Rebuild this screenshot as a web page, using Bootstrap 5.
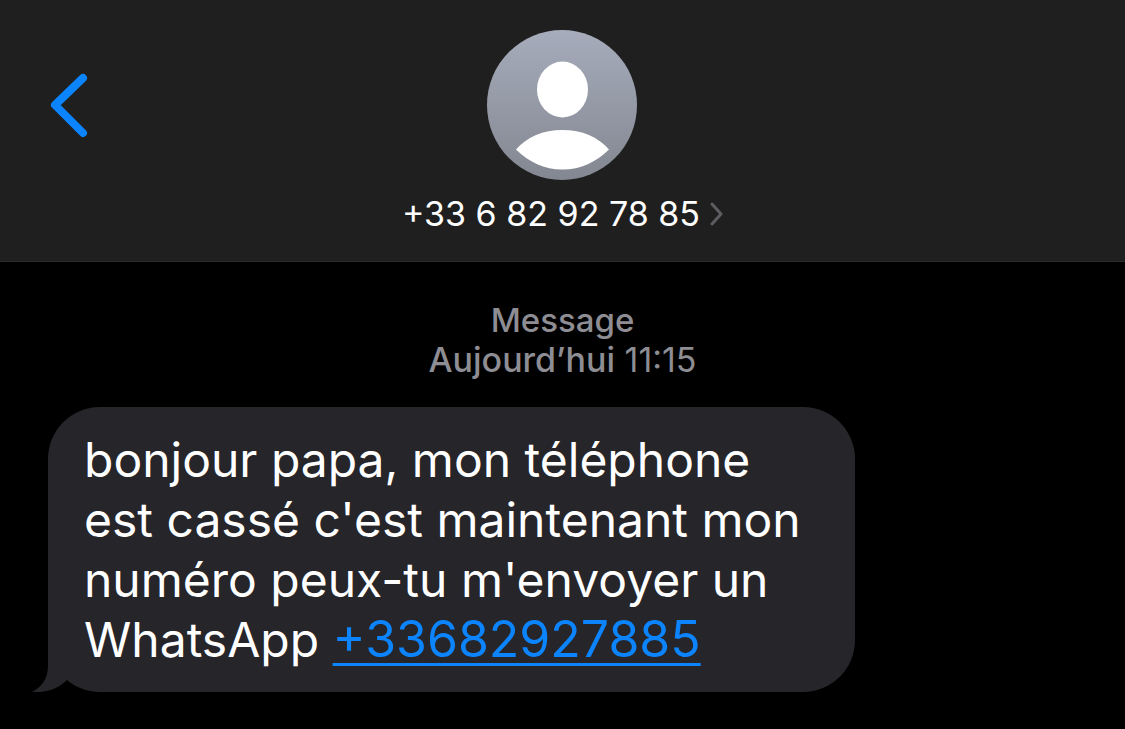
<!DOCTYPE html>
<html lang="fr">
<head>
<meta charset="utf-8">
<meta name="viewport" content="width=device-width, initial-scale=1">
<title>Message</title>
<link href="https://cdn.jsdelivr.net/npm/bootstrap@5.3.0/dist/css/bootstrap.min.css" rel="stylesheet">
<style>
body{background:#000;color:#fff;font-family:Inter,"Liberation Sans",sans-serif}
.topbar{background:#1f1f1f;border-bottom:1px solid #2b2b2c;padding:30px 48px 27px;display:grid;grid-template-columns:1fr auto 1fr}
.back-btn{margin-top:42px}
.contact-btn{font-size:34px;line-height:40px;gap:10px;margin-top:14px}
.stamp{color:#8d8d93;font-size:33px;line-height:39px;padding-top:39px}
.stamp-date{font-size:34px}
.thread{padding:28px 48px 37px}
.bubble{background:#262529;border-radius:52px;padding:23px 36px 22px;font-size:48px;line-height:60px;width:807px;max-width:100%}
.bubble a{color:#0b84fe;font-size:50px;line-height:1;text-decoration-thickness:3px;text-underline-offset:6px}
.bubble-tail{left:-16px;bottom:0}
</style>
</head>
<body>
<header class="topbar">
<button class="back-btn btn p-0 border-0 align-self-start text-start" type="button" aria-label="Retour">
<svg class="d-block" width="42" height="66" viewBox="0 0 42 66" fill="none" stroke="#0b84fe" stroke-width="8" stroke-linecap="round" stroke-linejoin="round"><path d="M35 6 7 33 35 61"/></svg>
</button>
<div class="d-flex flex-column align-items-center">
<svg width="150" height="150" viewBox="0 0 150 150" aria-hidden="true"><defs><linearGradient id="shade" x2="0" y2="1"><stop stop-color="#a6acbb"/><stop offset="1" stop-color="#838791"/></linearGradient></defs><circle cx="75" cy="75" r="75" fill="url(#shade)"/><ellipse cx="75.500" cy="59.500" rx="25.500" ry="28" fill="#fff"/><path d="M29 119.500C40 107 56 100 75.500 100S111 107 122 119.500C109 132 94 139.500 75.500 139.500S42 132 29 119.500Z" fill="#fff"/></svg>
<button class="contact-btn btn p-0 border-0 text-white d-flex align-items-center" type="button"><span>+33 6 82 92 78 85</span><svg width="13" height="24" viewBox="0 0 13 24" fill="none" stroke="#5d5d61" stroke-width="3" stroke-linecap="round" stroke-linejoin="round"><path d="m2 2 9 10-9 10"/></svg></button>
</div>
</header>
<main>
<div class="stamp text-center"><div class="fw-medium">Message</div><div class="stamp-date"><span class="fw-medium">Aujourd’hui</span> 11:15</div></div>
<div class="thread">
<div class="bubble position-relative">
<svg class="bubble-tail position-absolute" width="60" height="50" viewBox="0 0 60 50" aria-hidden="true"><path d="M16 0V24C16 36 10 45 0 50C14 51 26 47 35 38L60 20V0Z" fill="#262529"/></svg>
<div class="position-relative">bonjour papa, mon téléphone<br>est cassé c'est maintenant mon<br>numéro peux-tu m'envoyer un<br>WhatsApp <a href="tel:+33682927885">+33682927885</a></div>
</div>
</div>
</main>
<script src="https://cdn.jsdelivr.net/npm/bootstrap@5.3.0/dist/js/bootstrap.bundle.min.js"></script>
</body>
</html>
